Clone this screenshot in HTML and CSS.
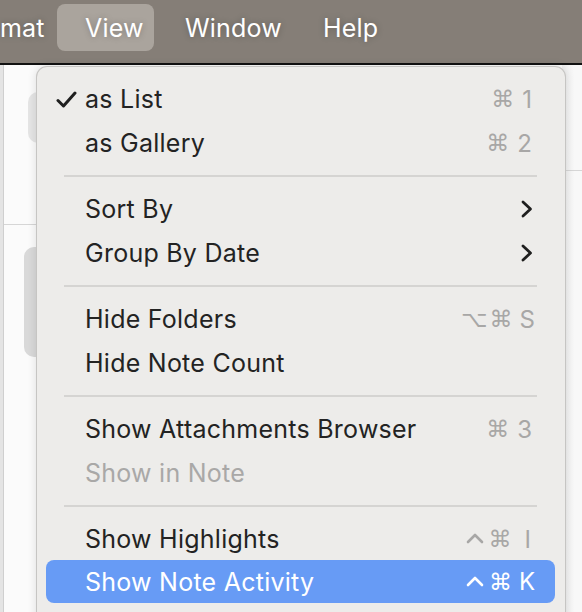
FILE: index.html
```html
<!DOCTYPE html>
<html>
<head>
<meta charset="utf-8">
<link rel="stylesheet" href="styles.css">
</head>
<body>
<div class="screen">
  <div class="menubar">
    <span class="mb-item mb-first">mat</span>
    <span class="mb-item mb-active">View</span>
    <span class="mb-item mb-window">Window</span>
    <span class="mb-item mb-help">Help</span>
  </div>
  <div class="workspace">
    <div class="strip"></div>
    <div class="pane">
      <div class="pane-left">
        <div class="pill pill-top"></div>
        <div class="hline hline-left"></div>
        <div class="pill pill-big"></div>
      </div>
      <div class="pane-right">
        <div class="hline hline-right"></div>
      </div>
    </div>

    <div class="menu">
      <div class="item">
        <span class="check"><svg width="22" height="18" viewBox="0 0 22 18"><path d="M2 9.5 L7.5 15 L19 2" fill="none" stroke="#1f1f1f" stroke-width="3" stroke-linecap="round" stroke-linejoin="round"/></svg></span>
        <span class="label">as List</span>
        <span class="sc"><span class="g">⌘</span><span class="k k-d">1</span></span>
      </div>
      <div class="item">
        <span class="check"></span>
        <span class="label">as Gallery</span>
        <span class="sc"><span class="g">⌘</span><span class="k k-d">2</span></span>
      </div>
      <div class="sep"></div>
      <div class="item">
        <span class="check"></span>
        <span class="label">Sort By</span>
        <span class="sc sc-chev"><svg class="chev" width="12" height="18" viewBox="0 0 12 18"><path d="M2 2 L9.5 9 L2 16" fill="none" stroke="#1f1f1f" stroke-width="2.8" stroke-linecap="round" stroke-linejoin="round"/></svg></span>
      </div>
      <div class="item">
        <span class="check"></span>
        <span class="label">Group By Date</span>
        <span class="sc sc-chev"><svg class="chev" width="12" height="18" viewBox="0 0 12 18"><path d="M2 2 L9.5 9 L2 16" fill="none" stroke="#1f1f1f" stroke-width="2.8" stroke-linecap="round" stroke-linejoin="round"/></svg></span>
      </div>
      <div class="sep"></div>
      <div class="item">
        <span class="check"></span>
        <span class="label">Hide Folders</span>
        <span class="sc"><span class="g g-opt">⌥</span><span class="g">⌘</span><span class="k">S</span></span>
      </div>
      <div class="item">
        <span class="check"></span>
        <span class="label">Hide Note Count</span>
        <span class="sc"></span>
      </div>
      <div class="sep"></div>
      <div class="item">
        <span class="check"></span>
        <span class="label">Show Attachments Browser</span>
        <span class="sc"><span class="g">⌘</span><span class="k k-d">3</span></span>
      </div>
      <div class="item disabled">
        <span class="check"></span>
        <span class="label">Show in Note</span>
        <span class="sc"></span>
      </div>
      <div class="sep"></div>
      <div class="item">
        <span class="check"></span>
        <span class="label">Show Highlights</span>
        <span class="sc"><svg class="caret" width="18" height="12" viewBox="0 0 18 12"><path d="M2 10 L9 3 L16 10" fill="none" stroke="currentColor" stroke-width="2.6" stroke-linecap="round" stroke-linejoin="round"/></svg><span class="g">⌘</span><span class="k k-i">I</span></span>
      </div>
      <div class="item selected">
        <span class="check"></span>
        <span class="label">Show Note Activity</span>
        <span class="sc"><svg class="caret" width="18" height="12" viewBox="0 0 18 12"><path d="M2 10 L9 3 L16 10" fill="none" stroke="currentColor" stroke-width="2.6" stroke-linecap="round" stroke-linejoin="round"/></svg><span class="g">⌘</span><span class="k">K</span></span>
      </div>
    </div>
  </div>
</div>
</body>
</html>
```

FILE: styles.css
```css
* { box-sizing: border-box; }
html, body {
  margin: 0;
  padding: 0;
  width: 582px;
  height: 612px;
  overflow: hidden;
  font-family: "Inter", "Liberation Sans", sans-serif;
}
.screen {
  width: 582px;
  height: 612px;
  overflow: hidden;
  display: flex;
  flex-direction: column;
  background: #f7f7f7;
}
.menubar {
  height: 65px;
  flex: none;
  background: #857e77;
  border-bottom: 2px solid #111;
  display: flex;
  align-items: flex-start;
  padding-top: 4px;
  color: #fff;
  font-size: 25px;
  letter-spacing: 0.2px;
}
.mb-item {
  height: 47px;
  display: flex;
  align-items: center;
  white-space: nowrap;
  text-shadow: 0 0 6px rgba(0,0,0,0.25);
}
.mb-first { width: 57px; padding-left: 0; }
.mb-active {
  width: 97px;
  padding-left: 28px;
  background: #aaa49d;
  border-radius: 8px;
}
.mb-window { margin-left: 31px; }
.mb-help { margin-left: 41px; }

.workspace {
  position: relative;
  flex: 1;
  display: flex;
}
.strip {
  width: 4px;
  flex: none;
  background: #e4e4e4;
  border-right: 1px solid #cfcfcf;
}
.pane {
  flex: 1;
  display: flex;
  justify-content: space-between;
  background: #fbfbfb;
}
.pane-left {
  width: 40px;
  display: flex;
  flex-direction: column;
  padding-top: 27px;
}
.pill {
  background: #e5e5e5;
  border-radius: 10px 0 0 10px;
}
.pill-top { height: 51px; margin-left: 24px; }
.pill-big { height: 110px; margin-top: 22px; margin-left: 20px; background: #d9d9d9; }
.hline { height: 1px; background: #d6d6d6; }
.hline-left { margin-top: 81px; }
.pane-right {
  width: 20px;
  padding-top: 105px;
  background: linear-gradient(to right, #eeeeee, #f8f8f8 60%);
}

.menu {
  position: absolute;
  left: 36px;
  top: 1px;
  width: 530px;
  height: 560px;
  background: #edecea;
  border: 1px solid #c6c5c3;
  border-bottom: none;
  border-radius: 11px 11px 0 0;
  padding: 10px 10px 0 9px;
  box-shadow: 0 0 10px rgba(0,0,0,0.12);
  font-size: 25px;
  letter-spacing: 0.25px;
  color: #232323;
}
.item {
  height: 44px;
  display: flex;
  align-items: center;
  border-radius: 8px;
}
.check {
  width: 39px;
  flex: none;
  display: flex;
  justify-content: flex-end;
  padding-right: 7px;
  padding-top: 2px;
}
.label { flex: 1; white-space: nowrap; }
.sc {
  flex: none;
  display: flex;
  align-items: center;
  color: #a8a7a6;
  padding-right: 20px;
  letter-spacing: 0;
}
.sc .g {
  font-family: "DejaVu Sans", sans-serif;
  font-size: 23px;
  margin-right: 7px;
}
.sc .g-opt { margin-right: 2px; }
.sc .k { font-size: 24px; }
.sc .k-d { margin-left: 1px; margin-right: 3px; }
.sc .k-i { margin-left: 6px; margin-right: 4px; }
.caret { display: block; margin-right: 5px; margin-top: -2px; }
.sc-chev { padding-right: 22px; }
.chev { display: block; }
.sep {
  height: 22px;
  display: flex;
  align-items: center;
  padding: 0 18px 0 18px;
}
.sep::before {
  content: "";
  flex: 1;
  height: 2px;
  background: #d5d4d2;
}
.disabled { color: #a9a8a7; }
.selected {
  background: #679bf5;
  color: #fff;
  height: 43px;
  margin-top: -1px;
}
.selected .sc { color: #fff; }
```
